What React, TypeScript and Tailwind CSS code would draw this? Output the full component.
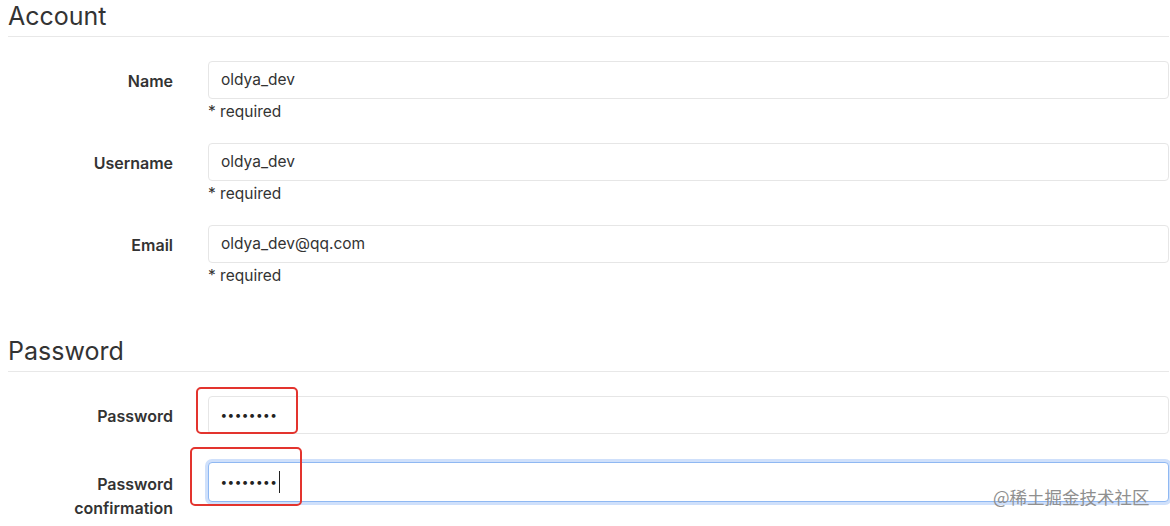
import React from 'react';

type Field = { label: React.ReactNode; value: string; required?: boolean };

const account: Field[] = [
  { label: 'Name', value: 'oldya_dev', required: true },
  { label: 'Username', value: 'oldya_dev', required: true },
  { label: 'Email', value: 'oldya_dev@qq.com', required: true },
];

function Row({ label, children, labelPad = 'pt-[8px]' }: { label: React.ReactNode; children: React.ReactNode; labelPad?: string }) {
  return (
    <div className="flex items-start">
      <div className={`w-[165px] shrink-0 text-right text-[16px] leading-[24px] font-semibold text-[#333] ${labelPad}`}>{label}</div>
      <div className="ml-[35px] flex-1">{children}</div>
    </div>
  );
}

function Box({ children, focused }: { children: React.ReactNode; focused?: boolean }) {
  return (
    <div
      className={`rounded-[4px] border pl-3 flex items-center text-[15.5px] text-[#333] bg-white ${
        focused ? 'h-[40px] border-[#8fb8f2] ring-[3px] ring-[#cfe0fb]' : 'h-[38px] border-[#e6e6e6]'
      }`}
    >
      {children}
    </div>
  );
}

function Dots() {
  return <span className="text-[12px] tracking-[1.4px] font-bold text-[#222]">••••••••</span>;
}

export default function App() {
  return (
    <div className="relative w-[1170px] h-[526px] overflow-hidden bg-white font-['Inter','Liberation_Sans',sans-serif] text-[#333]">
      <div className="pl-2 pr-[1px]">
        {/* Account */}
        <h2 className="text-[25px] leading-[32px] font-normal pb-1 border-b border-[#e8e8e8]">Account</h2>
        <div className="mt-6 flex flex-col gap-[21px]">
          {account.map((f, i) => (
            <Row key={i} label={f.label}>
              <Box>{f.value}</Box>
              {f.required && <div className="mt-[3px] text-[15.5px] leading-[20px] text-[#333]">* required</div>}
            </Row>
          ))}
        </div>

        {/* Password */}
        <h2 className="mt-[49px] text-[25px] leading-[32px] font-normal pb-1 border-b border-[#e8e8e8]">Password</h2>
        <div className="mt-6 flex flex-col gap-[28px]">
          <Row label="Password">
            <Box>
              <Dots />
            </Box>
          </Row>
          <Row label={<>Password<br />confirmation</>} labelPad="pt-[10px]">
            <Box focused>
              <Dots />
              <span className="ml-[1px] w-px h-[22px] bg-[#222]" />
            </Box>
          </Row>
        </div>
      </div>

      {/* annotation boxes */}
      <div className="absolute left-[196px] top-[387px] w-[102px] h-[47px] rounded-[5px] border-[2.5px] border-[#e3342e]" />
      <div className="absolute left-[190px] top-[447px] w-[112px] h-[59px] rounded-[5px] border-[2.5px] border-[#e3342e]" />

      {/* watermark */}
      <div className="absolute left-[993px] top-[485px] text-[17.5px] leading-[24px] text-[#8f8f8f] font-['Noto_Sans_CJK_SC',sans-serif]">
        @稀土掘金技术社区
      </div>
    </div>
  );
}
